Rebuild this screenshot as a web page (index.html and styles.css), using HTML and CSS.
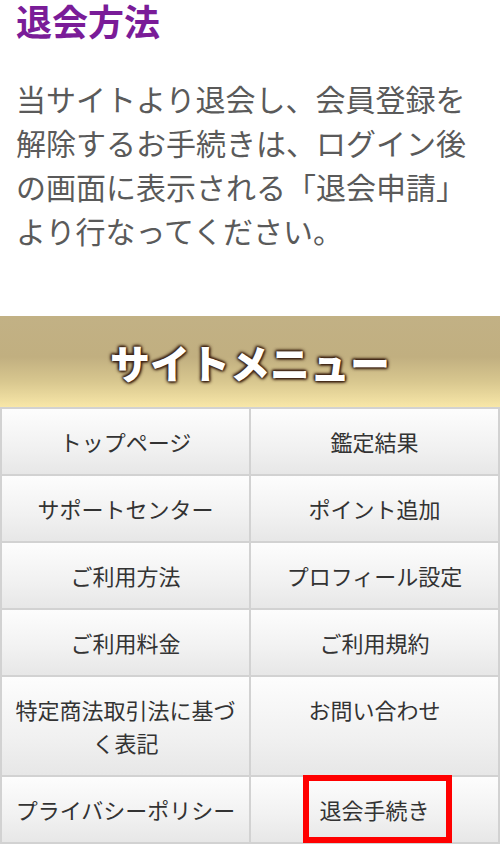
FILE: index.html
```html
<!DOCTYPE html>
<html lang="ja">
<head>
<meta charset="utf-8">
<title>退会方法</title>
<link rel="stylesheet" href="styles.css">
</head>
<body>
<main class="page">
  <h1 class="title">退会方法</h1>
  <p class="desc">当サイトより退会し、会員登録を解除するお手続きは、ログイン後の画面に表示される「退会申請」より行なってください。</p>
  <section class="menu">
    <h2 class="menu-title">サイトメニュー</h2>
    <ul class="menu-grid">
      <li class="cell">トップページ</li>
      <li class="cell">鑑定結果</li>
      <li class="cell">サポートセンター</li>
      <li class="cell">ポイント追加</li>
      <li class="cell">ご利用方法</li>
      <li class="cell">プロフィール設定</li>
      <li class="cell">ご利用料金</li>
      <li class="cell">ご利用規約</li>
      <li class="cell">特定商法取引法に基づく表記</li>
      <li class="cell">お問い合わせ</li>
      <li class="cell">プライバシーポリシー</li>
      <li class="cell cell-marked">退会手続き<span class="mark"></span></li>
    </ul>
  </section>
</main>
</body>
</html>
```

FILE: styles.css
```css
* { box-sizing: border-box; }
html, body { margin: 0; padding: 0; background: #fff; }
body {
  font-family: "Noto Sans CJK JP", "Noto Sans", sans-serif;
  width: 500px;
}
.page { display: flex; flex-direction: column; }
.title {
  margin: 0;
  padding: 0 16px;
  font-size: 36px;
  line-height: 40px;
  font-weight: 700;
  color: #7a1c98;
}
.desc {
  margin: 36px 0 0;
  padding: 0 16px;
  font-size: 30px;
  line-height: 44px;
  color: #5a5a5a;
}
.menu { margin-top: 64px; }
.menu-title {
  margin: 0;
  height: 91px;
  display: flex;
  align-items: center;
  justify-content: center;
  font-size: 40px;
  font-weight: 900;
  color: #fff;
  background: linear-gradient(to bottom, #c2b185 0%, #c1af80 45%, #d8c78f 72%, #f8e7a8 100%);
  text-shadow: 0 0 2px #3b2112, 0 0 3px #3b2112, 1px 1px 3px #3b2112, -1px -1px 3px #3b2112, 0 0 4px #3b2112;
}
.menu-grid {
  list-style: none;
  margin: 0;
  padding: 2px;
  display: grid;
  grid-template-columns: 1fr 1fr;
  gap: 2px;
  background: #d2d2d2;
}
.cell {
  position: relative;
  padding: 16px 10px;
  font-size: 22px;
  line-height: 33px;
  text-align: center;
  color: #333;
  background: linear-gradient(to bottom, #fdfdfd 0%, #f1f1f1 60%, #e7e7e7 100%);
}
.mark {
  position: absolute;
  left: 52px;
  top: -2px;
  width: 149px;
  height: 68px;
  border: 6px solid #ff0000;
}
```
